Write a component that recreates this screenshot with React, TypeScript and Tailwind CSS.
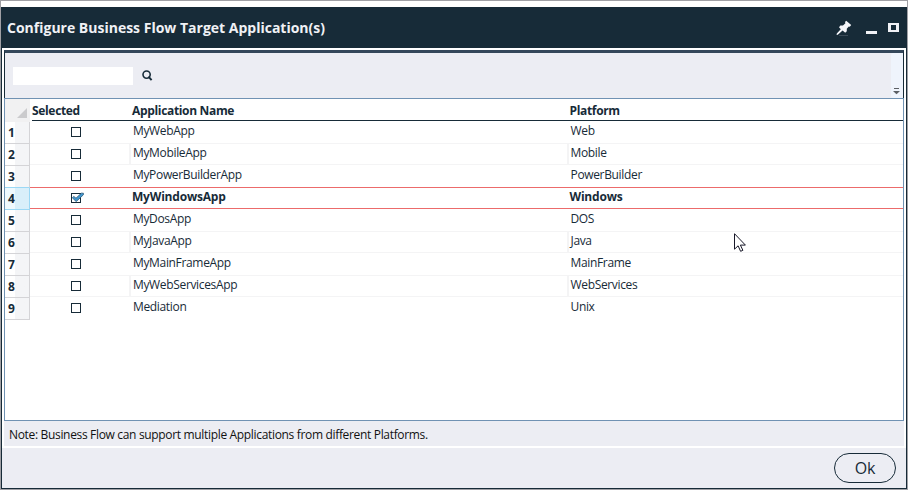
import React from 'react';

type Row = { name: string; platform: string; selected?: boolean };

const rows: Row[] = [
  { name: 'MyWebApp', platform: 'Web' },
  { name: 'MyMobileApp', platform: 'Mobile' },
  { name: 'MyPowerBuilderApp', platform: 'PowerBuilder' },
  { name: 'MyWindowsApp', platform: 'Windows', selected: true },
  { name: 'MyDosApp', platform: 'DOS' },
  { name: 'MyJavaApp', platform: 'Java' },
  { name: 'MyMainFrameApp', platform: 'MainFrame' },
  { name: 'MyWebServicesApp', platform: 'WebServices' },
  { name: 'Mediation', platform: 'Unix' },
];

function TitleBar() {
  return (
    <header className="flex h-[41px] shrink-0 items-center bg-[#172b38] pl-[6px] text-[#f0f1f5]">
      <h1 className="grow text-[14px] leading-5 font-bold whitespace-nowrap">
        Configure Business Flow Target Application(s)
      </h1>
      <svg className="mr-[14px] h-4 w-4" viewBox="0 0 16 16">
        <path d="M10.2.7 15.2 4.9 13.8 6.8 12.8 6.5 10.8 8.8 10.8 11.2 9.2 12.7 6.6 10.6 1.8 14.8.6 15 .8 13.6 4.8 9.2 3 7.2 4.4 5.5 7 5.5 9.4 3.2 9 2Z" fill="#f5f6fa" />
        <path d="M3 15.5h9" stroke="#3b4b58" strokeWidth="1" />
      </svg>
      <span className="mt-[9px] mr-[11px] h-[3px] w-[11px] bg-[#f0f1f5]" />
      <span className="mr-[8px] h-[9px] w-[11px] border-2 border-x-[3px] border-[#f0f1f5]" />
    </header>
  );
}

function Toolbar() {
  return (
    <div className="flex h-[48px] shrink-0 border-x border-t-[3px] border-x-[#172b38] border-t-[#34475a] bg-[#ecedf3]">
      <div className="flex grow items-center pl-2">
        <input className="h-[18px] w-[120px] bg-white outline-none" />
        <svg className="ml-[9px] h-[11px] w-[11px]" viewBox="0 0 11 11" fill="none" stroke="#172b38">
          <circle cx="4.6" cy="4.6" r="3.6" strokeWidth="1.6" />
          <path d="m6.5 6.7 3.1 3.4" strokeWidth="2" />
        </svg>
      </div>
      <div className="flex w-3 items-end justify-end rounded-l-xs bg-[#eff4fc] pr-[3px] pb-[3px]">
        <svg className="h-[7px] w-[7px]" viewBox="0 0 7 7">
          <path d="M1 .5h5" stroke="#5b5f64" />
          <path d="M0 3h7l-3.5 3.2z" fill="#5b5f64" />
        </svg>
      </div>
    </div>
  );
}

function CheckBox({ checked }: { checked?: boolean }) {
  return (
    <svg className="h-3 w-[14px] overflow-visible" viewBox="0 0 14 12">
      <rect x=".5" y="2.5" width="9" height="9" fill="white" stroke="#172b38" />
      {checked && (
        <path d="M1.3 6.8 2.8 5.4 5 7.2 10.3 2.2 12.4 2.2 12.4 3.8 5.2 10.6Z" fill="#4398d0" stroke="#285878" strokeWidth=".8" />
      )}
    </svg>
  );
}

function GridRow({ row, index }: { row: Row; index: number }) {
  const even = index % 2 === 1;
  const line = row.selected ? 'border-[#ec6b6b]' : even ? 'border-[#f4f4f5]' : 'border-transparent';
  const divider = even && !row.selected ? 'border-[#f4f4f5]' : 'border-transparent';
  return (
    <div className={`flex h-[22px] border-y text-[12px] leading-[18px] ${line} ${row.selected ? 'font-bold tracking-[-0.2px]' : 'tracking-[-0.34px]'}`}>
      <div className={`w-[101px] border-r-2 pt-[3px] pl-[41px] ${divider}`}>
        <CheckBox checked={row.selected} />
      </div>
      <div className={`w-[438px] border-r-2 ${divider} ${row.selected ? 'pl-[1px]' : 'pl-[2px]'}`}>{row.name}</div>
      <div className={row.selected ? 'pl-[0.5px]' : 'pl-[1.5px]'}>{row.platform}</div>
    </div>
  );
}

function Grid() {
  return (
    <div className="flex h-[323px] shrink-0 border border-[#7092b3] bg-white">
      <div className="w-[25px] shrink-0">
        <div className="flex h-[23px] items-end justify-end bg-[#f1f1f2] pr-[3px] pb-[4px]">
          <svg className="h-[10px] w-[10px]" viewBox="0 0 10 10">
            <path d="M10 0v10H0z" fill="#cbcbcd" />
          </svg>
        </div>
        {rows.map((row, i) => (
          <div
            key={row.name}
            className={`h-[22px] border-r border-b pl-[3px] text-[12px] leading-[22px] font-bold ${
              row.selected
                ? 'border-[#9bd8f5] bg-linear-to-r from-[#eff9fe] from-40% to-[#d9effa] to-40%'
                : row.name === 'MyPowerBuilderApp'
                  ? 'border-r-[#d4d4d7] border-b-[#9bd8f5] bg-linear-to-r from-white from-40% to-[#f4f5f7] to-40%'
                  : 'border-[#d4d4d7] bg-linear-to-r from-white from-40% to-[#f4f5f7] to-40%'
            }`}
          >
            {i + 1}
          </div>
        ))}
      </div>
      <div className="grow">
        <div className="ml-[2px] flex h-[22px] border-b border-[#172b38] text-[12px] leading-[23px] font-bold tracking-[-0.33px]">
          <div className="w-[100px]">Selected</div>
          <div className="w-[437.5px]">Application Name</div>
          <div>Platform</div>
        </div>
        {rows.map((row, i) => (
          <GridRow key={row.name} row={row} index={i} />
        ))}
      </div>
    </div>
  );
}

export default function App() {
  return (
    <div className="flex h-[490px] w-[908px] flex-col overflow-hidden border border-[#a0a0a5] bg-white pt-[6px] font-['Open_Sans','Noto_Sans',sans-serif] text-[#172b38]">
      <TitleBar />
      <main className="flex grow flex-col border-x border-b border-[#172b38] pt-[2px]">
        <div className="mx-[2px] flex flex-col">
          <Toolbar />
          <Grid />
          <p className="h-[25px] bg-[#ecedf3] pl-[5px] text-[12px] leading-[27px] tracking-[-0.33px] text-[#111]">
            Note: Business Flow can support multiple Applications from different Platforms.
          </p>
        </div>
        <footer className="mt-[2px] flex grow justify-end bg-[#ecedf3] pt-[5px] pr-[10px]">
          <button className="h-[30px] w-[62px] rounded-full border border-[#172b38] text-[16px] leading-7 tracking-[-0.3px]">Ok</button>
        </footer>
      </main>
      <svg className="absolute top-[233px] left-[734px] h-[19px] w-[12px]" viewBox="0 0 12 19">
        <path d="M.5.7v15.5l3.6-3.4 2.5 5.5 2.3-1-2.5-5.2h5Z" fill="white" stroke="#171728" />
      </svg>
    </div>
  );
}
